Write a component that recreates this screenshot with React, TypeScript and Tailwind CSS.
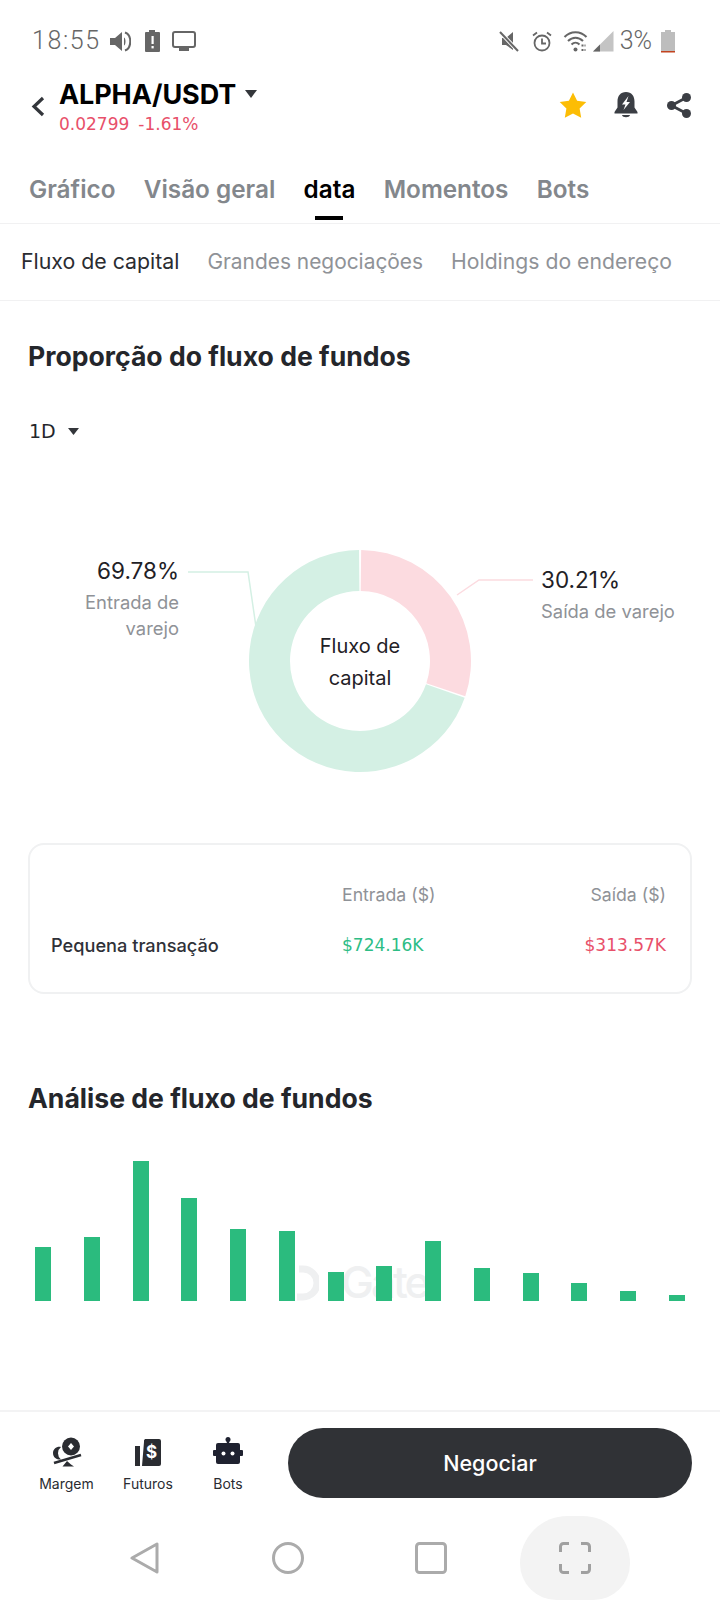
const bars = [
  { x: 35, h: 54 }, { x: 84, h: 64 }, { x: 133, h: 140 }, { x: 181, h: 103 }, { x: 230, h: 72 },
  { x: 279, h: 70 }, { x: 328, h: 29 }, { x: 376, h: 35 }, { x: 425, h: 60 }, { x: 474, h: 33 },
  { x: 523, h: 28 }, { x: 571, h: 18 }, { x: 620, h: 10 }, { x: 669, h: 6 },
];

function polar(r: number, deg: number) {
  const a = ((deg - 90) * Math.PI) / 180;
  return `${(111 + r * Math.cos(a)).toFixed(2)} ${(111 + r * Math.sin(a)).toFixed(2)}`;
}
function arc(start: number, end: number) {
  const large = end - start > 180 ? 1 : 0;
  return `M${polar(111, start)}A111 111 0 ${large} 1 ${polar(111, end)}L${polar(70, end)}A70 70 0 ${large} 0 ${polar(70, start)}Z`;
}

function StatusBar() {
  return (
    <div className="h-[81px] pt-[26px] pl-[32px] pr-[45px] flex items-start justify-between text-[#666]">
      <div className="flex items-center h-[30px]">
        <span className="text-[25px] leading-[30px] tracking-[1.6px] font-light w-[78px] [font-family:Roboto,sans-serif]">18:55</span>
        <svg width="21" height="21" viewBox="0 0 21 21" fill="#666">
          <path d="M0 7h5l7-6v19l-7-6H0z" />
          <path d="M14 6.500c2 1 2 7 0 8z" />
          <path d="M15 1.500c7 2.500 7 15.500 0 18" fill="none" stroke="#666" strokeWidth="2" />
        </svg>
        <svg width="15" height="22" viewBox="0 0 15 22" className="ml-[14px]">
          <path d="M4 0h6v2h4a1 1 0 0 1 1 1v18a1 1 0 0 1-1 1H1a1 1 0 0 1-1-1V3a1 1 0 0 1 1-1h3z" fill="#666" />
          <rect x="6.500" y="6" width="2.200" height="8" fill="#fff" />
          <rect x="6.500" y="16" width="2.200" height="2.400" fill="#fff" />
        </svg>
        <svg width="24" height="20" viewBox="0 0 24 20" className="ml-[12px]">
          <rect x="1" y="1" width="22" height="15" rx="2" fill="none" stroke="#666" strokeWidth="2" />
          <rect x="7" y="17" width="10" height="3" fill="#666" />
        </svg>
      </div>
      <div className="flex items-center h-[30px]">
        <svg width="20" height="21" viewBox="0 0 20 21">
          <path d="M3 7h4l7-6v18l-7-5H3z" fill="#666" />
          <path d="M1 1l18 19" stroke="#fff" strokeWidth="4" />
          <path d="M1 1l18 19" stroke="#666" strokeWidth="2" />
        </svg>
        <svg width="20" height="21" viewBox="0 0 20 21" className="ml-[13px]" fill="none" stroke="#666" strokeWidth="1.800">
          <circle cx="10" cy="12" r="7.500" />
          <path d="M10 7.500V12.500H14" />
          <path d="M1 4.500L5 1.500M19 4.500L15 1.500" />
        </svg>
        <svg width="25" height="22" viewBox="0 0 24 22" className="ml-[11px]" fill="none" stroke="#666" strokeWidth="2">
          <path d="M1 7C7 .5 17 .5 23 7" />
          <path d="M4.500 11C9 6.500 15 6.500 19.500 11" />
          <path d="M8 14.500c2.500-2.500 5.500-2.500 8 0" />
          <circle cx="12" cy="19.500" r="2" fill="#666" stroke="none" />
          <path d="M18 15.500h4M18 20h4" strokeDasharray="2 1" strokeWidth="1.800" />
        </svg>
        <svg width="21" height="21" viewBox="0 0 21 21" className="ml-[5px]">
          <path d="M0 20.500L20.500 0v20.500z" fill="#c4c4c4" />
          <path d="M0 20.500L7 13.500v7z" fill="#666" />
        </svg>
        <span className="ml-[6px] text-[25px] leading-[30px] font-light [font-family:Roboto,sans-serif]">3%</span>
        <svg width="14" height="23" viewBox="0 0 14 23" className="ml-[9px]">
          <path d="M4 0h6v2h4v19H0V2h4z" fill="#bdbdbd" />
          <rect x="0" y="21" width="14" height="1.500" fill="#c2431f" />
        </svg>
      </div>
    </div>
  );
}

function Header() {
  return (
    <div className="h-[60px] flex items-start pl-[31px] pr-[29px] justify-between">
      <div className="flex items-start">
        <svg width="14" height="21" viewBox="0 0 14 21" className="mt-[15px]" fill="none" stroke="#33363b" strokeWidth="3.200">
          <path d="M12 2L3 10.500L12 19" />
        </svg>
        <div className="ml-[14px]">
          <div className="flex items-center h-[28px]">
            <span className="text-[27px] leading-[28px] font-bold text-black tracking-[-0.1px]">ALPHA/USDT</span>
            <svg width="12" height="8" viewBox="0 0 12 8" className="ml-[9px] mb-[3px]"><path d="M0 0h12L6 8z" fill="#33363b" /></svg>
          </div>
          <div className="mt-[5px] flex text-[17px] leading-[20px] text-[#e8506a] [font-family:'DejaVu_Sans',sans-serif]">
            <span>0.02799</span>
            <span className="ml-[9px]">-1.61%</span>
          </div>
        </div>
      </div>
      <div className="flex items-center mt-[11px]">
        <svg width="28" height="26" viewBox="0 0 28 26"><path d="M14 .5l4.100 8.300 9.200 1.300-6.700 6.500 1.600 9.100L14 21.400l-8.200 4.300 1.600-9.100L.7 10.100l9.200-1.300z" fill="#fcbd05" strokeLinejoin="round" /></svg>
        <svg width="24" height="26" viewBox="0 0 24 26" className="ml-[27px]">
          <path d="M12 0c5.500 0 8.500 4 8.500 9.500v6l3 4.500v1.500H.5V20l3-4.500v-6C3.500 4 6.500 0 12 0z" fill="#3b3e44" />
          <path d="M8 23h8c-.5 3-7.500 3-8 0z" fill="#3b3e44" />
          <path d="M14.500 4L8 12.500h3.500L9.500 18 16 10h-3.500z" fill="#fff" />
        </svg>
        <svg width="24" height="25" viewBox="0 0 24 25" className="ml-[29px]" fill="#3b3e44">
          <circle cx="4.500" cy="12.500" r="4.500" /><circle cx="19.500" cy="4.500" r="4.500" /><circle cx="19.500" cy="20.500" r="4.500" />
          <path d="M4.500 12.500L19.500 4.500M4.500 12.500L19.500 20.500" stroke="#3b3e44" strokeWidth="2.800" />
        </svg>
      </div>
    </div>
  );
}

function Tabs() {
  const tabs = ["Gráfico", "Visão geral", "data", "Momentos", "Bots"];
  return (
    <div className="h-[83px] border-b border-[#f1f1f2] pl-[29px] flex gap-[28.300px] items-start pt-[33px]">
      {tabs.map((t) => (
        <div key={t} className="flex flex-col items-center">
          <span className={`text-[24.300px] leading-[30px] font-semibold ${t === "data" ? "text-black" : "text-[#83878c]"}`}>{t}</span>
          {t === "data" && <span className="block w-[28px] h-[4px] bg-black mt-[12px]" />}
        </div>
      ))}
    </div>
  );
}

function SubTabs() {
  return (
    <div className="h-[77px] border-b border-[#f1f1f2] pl-[21px] flex gap-[28px] items-center">
      <span className="text-[21.300px] text-[#2a2c31]">Fluxo de capital</span>
      <span className="text-[20.900px] text-[#8f9297]">Grandes negociações</span>
      <span className="text-[21.200px] text-[#8f9297]">Holdings do endereço</span>
    </div>
  );
}

function Donut() {
  const split = 108.8;
  return (
    <div className="relative h-[320px] mt-[59px] text-[#8f9297]">
      <svg width="720" height="320" viewBox="0 0 720 320" className="block">
        <g transform="translate(249 48)">
          <path d={arc(0.6, split - 0.3)} fill="#fcdbe0" />
          <path d={arc(split + 0.6, 359.500)} fill="#d4f0e4" />
        </g>
        <path d="M188 70H248L256 125" fill="none" stroke="#d4f0e4" strokeWidth="1.500" />
        <path d="M457 93L479 78H533" fill="none" stroke="#fcdbe0" strokeWidth="1.500" />
      </svg>
      <div className="absolute left-[60px] top-[54px] w-[119px] text-right">
        <div className="text-[22.500px] leading-[30px] text-[#1f2126]">69.78%</div>
        <div className="text-[18.400px] leading-[26px] mt-[3px]">Entrada de varejo</div>
      </div>
      <div className="absolute left-[541px] top-[63px]">
        <div className="text-[22.500px] leading-[30px] text-[#1f2126]">30.21%</div>
        <div className="text-[18.400px] leading-[26px] mt-[3px]">Saída de varejo</div>
      </div>
      <div className="absolute left-[300px] top-[128px] w-[120px] text-center text-[20px] leading-[32px] text-[#1f2126]">Fluxo de<br />capital</div>
    </div>
  );
}

function FlowTable() {
  return (
    <div className="mx-[28px] mt-[21px] h-[151px] rounded-[16px] border-2 border-[#f0f1f2] pl-[21px] pr-[24px] pt-[36px]">
      <div className="grid grid-cols-[291px_1fr_1fr] items-center text-[17.700px] leading-[28px] text-[#8f9297]">
        <span />
        <span>Entrada ($)</span>
        <span className="text-right">Saída ($)</span>
      </div>
      <div className="grid grid-cols-[291px_1fr_1fr] items-center mt-[23px] leading-[26px]">
        <span className="text-[18.200px] font-medium text-[#2f3138]">Pequena transação</span>
        <span className="text-[17px] text-[#2dbd85] [font-family:'DejaVu_Sans',sans-serif]">$724.16K</span>
        <span className="text-[17px] text-right text-[#e8506a] [font-family:'DejaVu_Sans',sans-serif]">$313.57K</span>
      </div>
    </div>
  );
}

function Watermark() {
  return (
    <div className="absolute left-[295px] bottom-[0px] flex items-end text-[#eff0f1]">
      <svg width="24" height="36" viewBox="0 0 24 36" fill="none" stroke="#eff0f1" strokeWidth="7">
        <path d="M4 4h4a14 14 0 0 1 0 28H2" />
      </svg>
      <span className="ml-[22px] text-[44px] leading-[38px] font-medium tracking-[-3px]">Gate</span>
    </div>
  );
}

function BarsChart() {
  return (
    <div className="relative h-[170px] mt-[15px] flex items-end">
      <div className="relative w-full h-[140px] flex items-end pl-[35px]">
        <Watermark />
        {bars.map((b, i) => (
          <div key={b.x} className="relative bg-[#2bbb7e] w-[16px]" style={{ height: b.h, marginLeft: i === 0 ? 0 : b.x - bars[i - 1].x - 16 }} />
        ))}
      </div>
    </div>
  );
}

function BottomBar() {
  return (
    <div className="mt-auto">
      <div className="h-[106px] border-t-2 border-[#f3f3f4] flex items-start pr-[28px]">
        <div className="w-[288px] text-[14px] text-[#2a2c31] flex pl-[40px] pt-[25px]">
          <div className="w-[53px] flex flex-col items-center">
            <svg width="30" height="30" viewBox="0 0 30 30" fill="#2a2c31">
              <path d="M9 10a8 8 0 0 0 0 12.500c-3 .5-8-1-8-6.500 0-4 4-7 8-6z" />
              <circle cx="19" cy="9.500" r="9" />
              <path d="M19 6l3 3.500-3 3.500-3-3.500z" fill="#fff" />
              <path d="M2 26l27-8" stroke="#2a2c31" strokeWidth="2.600" />
              <path d="M15 24l4 3.500 3 2H10.500z" />
            </svg>
            <span className="leading-[18px] mt-[8px]">Margem</span>
          </div>
          <div className="w-[54px] ml-[28px] flex flex-col items-center">
            <svg width="26" height="30" viewBox="0 0 26 30" className="mt-[1px]" fill="#2a2c31">
              <rect x="0" y="8" width="5" height="20" />
              <path d="M9 4a3 3 0 0 1 1-3h14a2 2 0 0 1 2 2v23a2 2 0 0 1-2 2H7z" />
              <text x="16.500" y="20" textAnchor="middle" fontSize="17" fontWeight="700" fill="#fff" fontFamily="Inter">$</text>
            </svg>
            <span className="leading-[18px] mt-[7px]">Futuros</span>
          </div>
          <div className="w-[30px] ml-[38px] flex flex-col items-center">
            <svg width="30" height="30" viewBox="0 0 30 30" className="shrink-0" fill="#1f2230">
              <circle cx="15" cy="2.500" r="2.500" />
              <rect x="13.800" y="3" width="2.400" height="5" />
              <rect x="3" y="6" width="24" height="21" rx="2" />
              <rect x="0" y="13" width="30" height="6" rx="1" />
              <circle cx="10.500" cy="16.500" r="2" fill="#fff" />
              <circle cx="19.500" cy="16.500" r="2" fill="#fff" />
            </svg>
            <span className="leading-[18px] mt-[8px]">Bots</span>
          </div>
        </div>
        <div className="mt-[16px] flex-1 h-[70px] rounded-full bg-[#303236] text-white text-[21.500px] font-medium flex items-center justify-center">Negociar</div>
      </div>
      <div className="h-[84px] flex items-center">
        <svg width="30" height="32" viewBox="0 0 30 32" className="ml-[130px]" fill="none" stroke="#ababab" strokeWidth="3" strokeLinejoin="round">
          <path d="M2 16L27 2v28z" />
        </svg>
        <svg width="32" height="32" viewBox="0 0 32 32" className="ml-[112px]" fill="none" stroke="#ababab" strokeWidth="3"><circle cx="16" cy="16" r="14.500" /></svg>
        <svg width="32" height="32" viewBox="0 0 32 32" className="ml-[111px]" fill="none" stroke="#ababab" strokeWidth="3"><rect x="1.500" y="1.500" width="29" height="29" rx="3" /></svg>
        <div className="ml-[73px] w-[110px] h-[84px] rounded-t-[52px] rounded-b-[40px] bg-[#f3f3f3] flex items-center justify-center">
          <svg width="32" height="32" viewBox="0 0 32 32" fill="none" stroke="#a0a0a0" strokeWidth="3">
            <path d="M10 1.500H4.500a3 3 0 0 0-3 3V10M22 1.500h5.500a3 3 0 0 1 3 3V10M10 30.500H4.500a3 3 0 0 1-3-3V22M22 30.500h5.500a3 3 0 0 0 3-3V22" />
          </svg>
        </div>
      </div>
    </div>
  );
}

export default function App() {
  return (
    <div className="w-[720px] h-[1600px] bg-white flex flex-col overflow-hidden [font-family:Inter,sans-serif]">
      <StatusBar />
      <Header />
      <Tabs />
      <SubTabs />
      <h2 className="mt-[37px] ml-[28px] text-[26.600px] leading-[36px] font-bold text-[#24262b]">Proporção do fluxo de fundos</h2>
      <div className="mt-[45px] ml-[29px] flex items-center text-[19px] leading-[24px] text-[#24262b] [font-family:'DejaVu_Sans',sans-serif]">
        1D
        <svg width="11" height="7" viewBox="0 0 11 7" className="ml-[12px]"><path d="M0 0h11L5.500 7z" fill="#33363b" /></svg>
      </div>
      <Donut />
      <FlowTable />
      <h2 className="mt-[86px] ml-[28px] text-[26.600px] leading-[36px] font-bold text-[#24262b]">Análise de fluxo de fundos</h2>
      <BarsChart />
      <BottomBar />
    </div>
  );
}
